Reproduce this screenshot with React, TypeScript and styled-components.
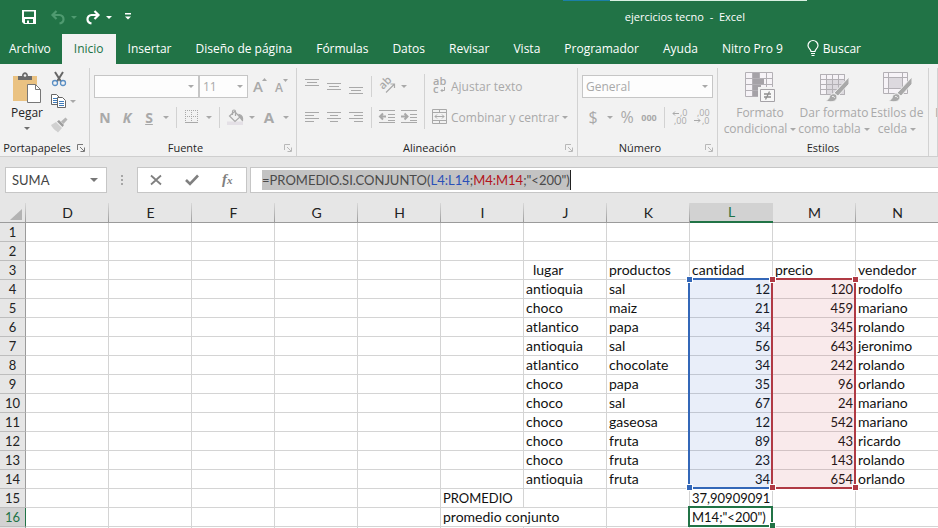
import React from "react";
import styled, { createGlobalStyle, css } from "styled-components";

const GREEN = "#217346";
const MUTED = "#a9a9a9";
const UI_FONT = `"Open Sans", "Noto Sans", sans-serif`;
const CELL_FONT = `Lato, "Open Sans", sans-serif`;
const COL = 83;
const ROW = 19;
const GUTTER = 26;
const HEAD = 20;

const Global = createGlobalStyle`
  * { box-sizing: border-box; }
  body { margin: 0; background: #e6e6e6; font-family: ${UI_FONT}; font-size: 12px; color: #262626; overflow: hidden; }
  button, input, select { font: inherit; color: inherit; margin: 0; }
  svg { flex: none; overflow: visible; }
`;

const Window = styled.div`
  display: flex;
  flex-direction: column;
  height: 100vh;
  overflow: hidden;
`;

/* ---------- title bar and tabs ---------- */

const TitleBar = styled.header`
  position: relative;
  display: flex;
  align-items: center;
  flex: none;
  height: 34px;
  padding-left: 21px;
  background: ${GREEN};
  color: #fff;
`;

const TopStrip = styled.div`
  position: absolute;
  inset: 0 0 auto 0;
  height: 1px;
  display: grid;
  grid-template-columns: 60% 5% 21% 1fr;
  & > :nth-child(2) { background: #1b7fa6; }
  & > :nth-child(3) { background: #d9f0e2; }
`;

const QuickButton = styled.button<{ $w: number; $dim?: boolean }>`
  display: flex;
  align-items: center;
  width: ${(p) => p.$w}px;
  height: 24px;
  padding: 0;
  border: 0;
  background: none;
  color: ${(p) => (p.$dim ? "#4f9a70" : "#fff")};
`;

const DocTitle = styled.h1`
  flex: 1;
  margin: 0;
  padding-right: 193px;
  text-align: right;
  font-size: 11px;
  line-height: 16px;
  font-weight: 400;
  white-space: pre;
`;

const TabBar = styled.nav`
  display: flex;
  flex: none;
  height: 30px;
  background: ${GREEN};
`;

const Tab = styled.button<{ $active?: boolean }>`
  display: flex;
  align-items: center;
  gap: 4px;
  flex: none;
  height: 30px;
  margin: 0;
  padding: 0 12px 1px;
  border: 0;
  white-space: nowrap;
  background: ${(p) => (p.$active ? "#f2f2f2" : "transparent")};
  color: ${(p) => (p.$active ? GREEN : "#fff")};
  &:first-child { padding-left: 9px; padding-right: 11px; }
`;

/* ---------- ribbon ---------- */

const Ribbon = styled.section`
  display: flex;
  flex: none;
  height: 93px;
  background: #f2f2f2;
  border-bottom: 1px solid #cfcfcf;
`;

const GroupBox = styled.div<{ $w?: number }>`
  display: flex;
  flex-direction: column;
  flex: ${(p) => (p.$w ? `0 0 ${p.$w}px` : "1 0 0")};
  min-width: 0;
  height: 88px;
  margin-top: 4px;
  border-right: 1px solid #d2d2d2;
  overflow: hidden;
`;

const GroupBody = styled.div<{ $pad?: number }>`
  display: flex;
  flex: 1;
  padding: 6px ${(p) => p.$pad ?? 4}px 0;
`;

const GroupFooter = styled.div`
  display: flex;
  align-items: center;
  height: 17px;
`;

const GroupName = styled.span`
  flex: 1;
  text-align: center;
  font-size: 11px;
  line-height: 16px;
`;

const Launcher = styled.button<{ $off?: boolean }>`
  display: flex;
  width: 15px;
  height: 14px;
  padding: 3px 0 0 3px;
  border: 0;
  background: none;
  color: ${(p) => (p.$off ? "#b8b8b8" : "#777")};
`;

const Stack = styled.div`
  display: flex;
  flex-direction: column;
  gap: 7px;
  min-width: 0;
`;

const ToolRow = styled.div`
  display: flex;
  align-items: center;
  height: 24px;
`;

const Tool = styled.button<{ $w?: number; $bold?: boolean; $italic?: boolean; $under?: boolean; $size?: number }>`
  display: flex;
  align-items: center;
  justify-content: center;
  flex: none;
  width: ${(p) => p.$w ?? 22}px;
  height: 24px;
  padding: 0;
  border: 0;
  background: none;
  color: ${MUTED};
  font-size: ${(p) => p.$size ?? 14}px;
  ${(p) => p.$bold && css`font-weight: 700;`}
  ${(p) => p.$italic && css`font-style: italic;`}
  ${(p) => p.$under && css`text-decoration: underline;`}
`;

const Divider = styled.span<{ $tall?: boolean }>`
  flex: none;
  width: 1px;
  height: ${(p) => (p.$tall ? 55 : 21)}px;
  margin: 0 4px;
  background: #d2d2d2;
`;

const TextTool = styled.button`
  display: flex;
  align-items: center;
  gap: 3px;
  height: 24px;
  padding: 0 0 0 3px;
  border: 0;
  background: none;
  color: ${MUTED};
  white-space: nowrap;
`;

const Picker = styled.span<{ $w?: number }>`
  display: grid;
  align-items: center;
  flex: none;
  width: ${(p) => (p.$w ? `${p.$w}px` : "100%")};
  height: 23px;
  border: 1px solid #c6c6c6;
  background: #fdfdfd;
  color: ${MUTED};
  & > * { grid-area: 1 / 1; }
  & > svg { justify-self: end; margin-right: 4px; pointer-events: none; }
`;

const Select = styled.select`
  appearance: none;
  width: 100%;
  height: 21px;
  padding: 0 3px;
  border: 0;
  background: none;
  opacity: 1;
  outline: none;
`;

const Clipboard = styled.div`
  display: flex;
  gap: 1px;
`;

const PasteButton = styled.button`
  display: flex;
  flex-direction: column;
  align-items: center;
  width: 46px;
  height: 60px;
  margin-top: -2px;
  padding: 0;
  border: 0;
  background: none;
  color: #262626;
  line-height: 18px;
  & > svg:last-child { margin-top: 5px; color: #6e6e6e; }
`;

const ClipColumn = styled.div`
  display: flex;
  flex-direction: column;
  margin-top: -7px;
`;

const ClipRow = styled.div`
  display: flex;
  align-items: center;
  height: 23px;
`;

const BigTool = styled.button<{ $w: number }>`
  display: flex;
  flex-direction: column;
  align-items: center;
  flex: none;
  width: ${(p) => p.$w}px;
  margin-top: -3px;
  padding: 0;
  border: 0;
  background: none;
  color: ${MUTED};
  line-height: 16px;
  white-space: nowrap;
  & > svg { margin-bottom: 2px; }
`;

const LabelLine = styled.span`
  display: flex;
  align-items: center;
  gap: 3px;
`;

/* ---------- formula bar ---------- */

const FormulaBar = styled.section`
  display: flex;
  flex: none;
  height: 46px;
  padding: 10px 0 10px 5px;
  background: #e6e6e6;
`;

const NameBox = styled.label`
  display: flex;
  align-items: center;
  width: 102px;
  height: 26px;
  padding: 0 8px 0 6px;
  border: 1px solid #c6c6c6;
  background: #fff;
  color: #777;
`;

const NameInput = styled.input`
  flex: 1;
  min-width: 0;
  padding: 0;
  border: 0;
  outline: none;
  background: none;
  font-family: ${CELL_FONT};
  font-size: 13px;
  color: #444;
`;

const Grip = styled.span`
  display: grid;
  place-items: center;
  width: 30px;
  color: #a6a6a6;
`;

const EditButtons = styled.div`
  display: grid;
  grid-template-columns: repeat(3, 1fr);
  width: 110px;
  height: 26px;
  margin-right: 3px;
  border: 1px solid #c6c6c6;
  background: #fff;
`;

const EditButton = styled.button`
  display: grid;
  place-items: center;
  padding: 0;
  border: 0;
  background: none;
  color: #808080;
`;

const FormulaBox = styled.div`
  flex: 1;
  height: 26px;
  padding: 2px 0 0 11px;
  border: 1px solid #c6c6c6;
  border-right: 0;
  background: #fff;
  font-family: ${CELL_FONT};
  font-size: 13px;
  line-height: 20px;
  color: #4a4a4a;
  white-space: nowrap;
  outline: none;
`;

const Selected = styled.span`
  display: inline-block;
  height: 20px;
  background: #c3c3c3;
  border-right: 1px solid #222;
`;

const Ref = styled.span<{ $c: string }>`
  color: ${(p) => p.$c};
`;

/* ---------- sheet ---------- */

const Sheet = styled.main`
  position: relative;
  flex: 1;
  min-height: 0;
  overflow: hidden;
  background: #fff;
`;

const Grid = styled.table`
  table-layout: fixed;
  width: ${GUTTER + COL * 12}px;
  border-collapse: separate;
  border-spacing: 0;
  font-family: ${CELL_FONT};
  font-size: 14px;
  font-variant-ligatures: none;
  line-height: 18px;
  color: #111;
`;

const Column = styled.col<{ $w: number }>`
  width: ${(p) => p.$w}px;
`;

const ColHead = styled.th<{ $on?: boolean }>`
  height: ${HEAD}px;
  padding: 0;
  font-weight: 400;
  color: ${(p) => (p.$on ? GREEN : "#222")};
  background: ${(p) =>
    p.$on
      ? "#d2d2d2"
      : "linear-gradient(#d8d8d8, #9c9c9c) right / 1px 100% no-repeat #e6e6e6"};
  border-bottom: ${(p) => (p.$on ? `2px solid ${GREEN}` : "1px solid #9b9b9b")};
`;

const Corner = styled(ColHead)`
  & > svg { display: block; margin: 4px 0 0 10px; }
`;

const RowHead = styled.th<{ $on?: boolean }>`
  height: ${ROW}px;
  padding: 0;
  font-size: 13px;
  font-weight: 400;
  text-align: center;
  background: ${(p) => (p.$on ? "#d2d2d2" : "#e6e6e6")};
  color: ${(p) => (p.$on ? GREEN : "#222")};
  border-right: 1px solid ${(p) => (p.$on ? GREEN : "#9b9b9b")};
  border-bottom: 1px solid #bdbdbd;
`;

const Cell = styled.td<{ $num?: boolean; $indent?: boolean; $caps?: boolean }>`
  height: ${ROW}px;
  padding: 0 2px 0 ${(p) => (p.$indent ? 9 : 2)}px;
  border-right: 1px solid #d4d4d4;
  border-bottom: 1px solid #d4d4d4;
  font-size: ${(p) => (p.$num || p.$caps ? 13 : 14)}px;
  text-align: ${(p) => (p.$num ? "right" : "left")};
  white-space: nowrap;
`;

const CellInput = styled.input`
  display: block;
  width: 100%;
  height: 18px;
  padding: 0;
  border: 0;
  outline: none;
  background: transparent;
`;

const RangeFrame = styled.div<{ $col: number; $row: number; $rows: number; $c: string; $fill: string }>`
  position: absolute;
  left: ${(p) => GUTTER + COL * p.$col - 2}px;
  top: ${(p) => HEAD + ROW * p.$row - 2}px;
  width: ${COL + 2}px;
  height: ${(p) => ROW * p.$rows + 2}px;
  border: 2px solid ${(p) => p.$c};
  background: ${(p) => p.$fill};
  pointer-events: none;
`;

const Handle = styled.i<{ $c: string; $right?: boolean; $bottom?: boolean }>`
  position: absolute;
  width: 5px;
  height: 5px;
  background: ${(p) => p.$c};
  outline: 1px solid #fff;
  ${(p) => (p.$right ? "right: -4px;" : "left: -3px;")}
  ${(p) => (p.$bottom ? "bottom: -3px;" : "top: -3px;")}
`;

/* ---------- icons ---------- */

const Caret = ({ size = 6 }: { size?: number }) => (
  <svg width={size} height={size / 2} viewBox="0 0 6 3" fill="currentColor"><path d="M0 0h6L3 3z" /></svg>
);

const SaveIcon = () => (
  <svg width="15" height="15" viewBox="0 0 15 15" fill="#fff">
    <path fillRule="evenodd" d="M1 0h14v14H3L1 12zM3 1.6V7h10V1.6zM4 9v4h2v-2.500h2V13h4V9z" />
  </svg>
);

const TurnIcon = ({ flip }: { flip?: boolean }) => (
  <svg width="16" height="15" viewBox="0 0 16 15" fill="none" stroke="currentColor" strokeWidth="2.200">
    <g transform={flip ? "matrix(-1 0 0 1 16 0)" : undefined}>
      <path d="M6.500 1 2.500 5l4 4" />
      <path d="M2.500 5h7a4 4 0 0 1 4 4.200c0 2.300-1.500 3.800-4 4.300" />
    </g>
  </svg>
);

const CustomizeIcon = () => (
  <svg width="7" height="8" viewBox="0 0 7 8" fill="#fff"><path d="M0 0h6v1.400H0zM0 3.500h6l-3 3z" /></svg>
);

const BulbIcon = () => (
  <svg width="12" height="17" viewBox="0 0 12 17" fill="none" stroke="#fff" strokeWidth="1.200">
    <path d="M4 11.500C4 9 1 8.500 1 5.500a5 5 0 0 1 10 0c0 3-3 3.500-3 6zM4 13.500h4M4.500 15.500h3" />
  </svg>
);

const LauncherIcon = () => (
  <svg width="8" height="8" viewBox="0 0 8 8" fill="none" stroke="currentColor">
    <path d="M.5 6V.5H6M3 3l4 4M7.500 3.500v4h-4" />
  </svg>
);

const PasteIcon = () => (
  <svg width="30" height="32" viewBox="0 0 30 32">
    <path d="M1 4h24v25H1z" fill="#eac282" />
    <path d="M6 8V4h4c0-5 6-5 6 0h4v4z" fill="#6b6b6b" />
    <circle cx="13" cy="3.500" r="1.300" fill="#f2f2f2" />
    <path d="M15.500 12.500h8l5 5v13h-13z" fill="#fff" stroke="#777" />
    <path d="M23.500 12.500v5h5" fill="none" stroke="#777" />
  </svg>
);

const CutIcon = () => (
  <svg width="16" height="16" viewBox="0 0 16 16" fill="none">
    <path d="M4 1 10 10.500M12 1 6 10.500" stroke="#666" strokeWidth="2" />
    <circle cx="4" cy="12" r="2.500" stroke="#5b8fc4" strokeWidth="1.300" />
    <circle cx="12" cy="12" r="2.500" stroke="#5b8fc4" strokeWidth="1.300" />
  </svg>
);

const CopyIcon = () => (
  <svg width="16" height="15" viewBox="0 0 16 15" fill="#fff" stroke="#666">
    <path d="M.5.5h5l3 3v7h-8z" />
    <path d="M2 4.500h4M2 6.500h4M2 8.500h4" stroke="#3f7cba" />
    <path d="M6.500 3.500h5l3 3v7h-8z" />
    <path d="M8 7.500h5M8 9.500h5M8 11.500h5" stroke="#3f7cba" />
  </svg>
);

const PainterIcon = () => (
  <svg width="17" height="16" viewBox="0 0 17 16">
    <path d="M0 8l5-3 6 6-4 4.500c-1-1.500-5-3-7-7.500z" fill="#d0d0d0" />
    <path d="M6 4.500 8 3l5 5-1.500 2z" fill="#9d9d9d" />
    <path d="M10 4.500 14.500.5 16.500 2.500 12.500 7z" fill="#b5b5b5" />
  </svg>
);

const FontSizeIcon = ({ down }: { down?: boolean }) => (
  <svg width="14" height="18" viewBox="0 0 14 18" fill="currentColor">
    <text x="0" y="15" fontFamily="Open Sans" fontWeight="600" fontSize={down ? 12 : 15}>A</text>
    <path d={down ? "M8 2h5l-2.500 3z" : "M9 4h5L11.500 1z"} />
  </svg>
);

const BordersIcon = () => (
  <svg width="14" height="14" viewBox="0 0 14 14" fill="none" stroke="currentColor">
    <path d="M0 .5h13M0 6.500h13M.5 0v12M6.500 0v12M12.500 0v12" strokeDasharray="1 1" />
    <path d="M0 12.500h13" />
  </svg>
);

const FillIcon = () => (
  <svg width="17" height="17" viewBox="0 0 17 17" fill="none" stroke="currentColor" strokeWidth="1.200">
    <path d="M0 12.500h16v3.500H0z" fill="#e4e0e6" stroke="none" />
    <path d="M7.500 2.500 13 8l-5 4.500L2.500 7z" fill="#f2f2f2" />
    <path d="M5.500 6V2.500a1.500 1.500 0 0 1 3 0V7" />
    <path d="M12 5.500c3 .5 4 3 3.500 6C14 10.500 14 9 12.500 8z" fill="currentColor" />
  </svg>
);

const LinesIcon = ({ d }: { d: string }) => (
  <svg width="15" height="15" viewBox="0 0 15 15" stroke="currentColor" strokeWidth="1"><path d={d} /></svg>
);

const alignRows: [string, string][] = [
  ["Alinear en la parte superior", "M0 .5h14M2 3.500h10M0 6.500h14"],
  ["Alinear en el medio", "M0 4.500h14M2 7.500h10M0 10.500h14"],
  ["Alinear en la parte inferior", "M0 8.500h14M2 11.500h10M0 14.500h14"],
];
const alignCols: [string, string][] = [
  ["Alinear a la izquierda", "M0 2.500h14M0 5.500h9M0 8.500h14M0 11.500h9"],
  ["Centrar", "M0 2.500h14M3 5.500h8M0 8.500h14M3 11.500h8"],
  ["Alinear a la derecha", "M0 2.500h14M5 5.500h9M0 8.500h14M5 11.500h9"],
];

const AngleIcon = () => (
  <svg width="18" height="18" viewBox="0 0 18 18" fill="none" stroke="currentColor" strokeWidth="1.200">
    <text x="0" y="0" transform="translate(5 13) rotate(-45)" fontFamily="Open Sans" fontWeight="600" fontSize="11" fill="currentColor" stroke="none">ab</text>
    <path d="M8 15.500 16 7.500M12.500 7H16.500v4" />
  </svg>
);

const IndentIcon = ({ right }: { right?: boolean }) => (
  <svg width="17" height="15" viewBox="0 0 17 15" fill="none" stroke="currentColor">
    <path d="M0 .5h16M9 4.500h7M9 7.500h7M0 12.500h16M9 10.500h7" />
    <path d={right ? "M0 6.500h6M3.500 3.500l3 3-3 3" : "M7 6.500H1M4 3.500l-3 3 3 3"} strokeWidth="2" />
  </svg>
);

const WrapIcon = () => (
  <svg width="16" height="18" viewBox="0 0 16 18" fill="currentColor">
    <text x="1" y="8" fontFamily="Open Sans" fontWeight="600" fontSize="11">ab</text>
    <text x="1" y="16" fontFamily="Open Sans" fontWeight="600" fontSize="11">c</text>
    <path d="M12.500 10v3.500H9M10.500 12 9 13.500l1.500 1.500" fill="none" stroke="currentColor" />
  </svg>
);

const MergeIcon = () => (
  <svg width="16" height="16" viewBox="0 0 16 16" fill="none" stroke="currentColor">
    <path d="M.5.5h14v14H.5zM.5 3.500h14M.5 11.500h14M7.500.5v3M7.500 11.500v3" />
    <path d="M3 7.500h9M5 5.500l-2 2 2 2M10 5.500l2 2-2 2" />
  </svg>
);

const DecimalIcon = ({ less }: { less?: boolean }) => (
  <svg width="16" height="16" viewBox="0 0 16 16" fill="currentColor">
    <g fontFamily="Open Sans" fontSize="9">
      <text x={less ? 3 : 8} y="7">{less ? ",00" : ",0"}</text>
      <text x={less ? 8 : 2} y="15">{less ? ",0" : ",00"}</text>
    </g>
    <path d={less ? "M0 11.500h6M4 9.500l2 2-2 2" : "M7 4.500H1M3 2.500l-2 2 2 2"} fill="none" stroke="currentColor" />
  </svg>
);

const CondFormatIcon = () => (
  <svg width="32" height="32" viewBox="0 0 32 32" fill="none" stroke="#b3b0b5">
    <path d="M1.500 1.500h27v24h-27zM1.500 7.500h27M1.500 13.500h27M1.500 19.500h27M8.500 1.500v24M15.500 1.500v24M22.500 1.500v24" fill="#f6f3f7" />
    <path d="M9 2h6v5H9zM9 8h11v5H9zM9 14h8v5H9zM9 20h5v5H9z" fill="#a5a2a7" stroke="none" />
    <path d="M15.500 17.500h15v13h-15z" fill="#f7f7f7" stroke="#f2f2f2" strokeWidth="3" />
    <path d="M16.500 18.500h14v12h-14z" fill="#f7f7f7" stroke="#a5a2a7" />
    <path d="M20 23h7M20 26h7M25.500 20.500l-4 8" stroke="#8f8f8f" strokeWidth="1.300" />
  </svg>
);

const Brush = () => (
  <g>
    <path d="M31 6v7L20 25l-4-3z" fill="#a9a9a9" stroke="#f2f2f2" />
    <path d="M7 29.500c4 0 4-3 5-5 2-3 7-2 7 1.500 0 5-7 6-12 3.500z" fill="#a9a9a9" stroke="#f2f2f2" />
    <path d="M14 25.500c1.500-.5 2.500.5 2.500 1.500" fill="none" stroke="#eee" />
  </g>
);

const TableFormatIcon = () => (
  <svg width="32" height="32" viewBox="0 0 32 32" fill="none" stroke="#b3b0b5">
    <path d="M2.500 3.500h24v20h-24z" fill="#f6f3f7" />
    <path d="M9 9h17v14H9z" fill="#dcd9de" stroke="none" />
    <path d="M2.500 3.500h24v20h-24zM2.500 8.500h24M2.500 13.500h24M2.500 18.500h24M8.500 3.500v20M14.500 3.500v20M20.500 3.500v20" />
    <Brush />
  </svg>
);

const CellStyleIcon = () => (
  <svg width="32" height="32" viewBox="0 0 32 32" fill="none" stroke="#b3b0b5">
    <path d="M2.500 1.500h24v21h-24zM2.500 6.500h24M2.500 17.500h24M7.500 1.500v21M21.500 1.500v21" fill="#f6f3f7" />
    <path d="M8 7h13v10H8z" fill="#dcd9de" stroke="none" />
    <Brush />
  </svg>
);

const CancelIcon = () => (
  <svg width="12" height="12" viewBox="0 0 12 12" fill="none" stroke="currentColor" strokeWidth="1.800"><path d="M1 1.500l10 9M11 1.500l-10 9" /></svg>
);
const AcceptIcon = () => (
  <svg width="14" height="12" viewBox="0 0 14 12" fill="none" stroke="currentColor" strokeWidth="2.600"><path d="M1 6l4 4 8-8.500" /></svg>
);
const FxIcon = () => (
  <svg width="14" height="16" viewBox="0 0 14 16" fill="currentColor" fontFamily="Liberation Serif" fontStyle="italic" fontWeight="700">
    <text x="1" y="12" fontSize="15">f</text>
    <text x="6" y="12" fontSize="11">x</text>
  </svg>
);

/* ---------- data ---------- */

const tabs = ["Archivo", "Inicio", "Insertar", "Diseño de página", "Fórmulas", "Datos", "Revisar", "Vista", "Programador", "Ayuda", "Nitro Pro 9"];
const columns = ["D", "E", "F", "G", "H", "I", "J", "K", "L", "M", "N", "O"];

const records: [string, string, number, number, string][] = [
  ["antioquia", "sal", 12, 120, "rodolfo"],
  ["choco", "maiz", 21, 459, "mariano"],
  ["atlantico", "papa", 34, 345, "rolando"],
  ["antioquia", "sal", 56, 643, "jeronimo"],
  ["atlantico", "chocolate", 34, 242, "rolando"],
  ["choco", "papa", 35, 96, "orlando"],
  ["choco", "sal", 67, 24, "mariano"],
  ["choco", "gaseosa", 12, 542, "mariano"],
  ["choco", "fruta", 89, 43, "ricardo"],
  ["choco", "fruta", 23, 143, "rolando"],
  ["antioquia", "fruta", 34, 654, "orlando"],
];

const blanks = (n: number, key: string) => Array.from({ length: n }, (_, i) => <Cell key={key + i} />);

type GroupProps = { name: string; w?: number; launcher?: "on" | "off"; pad?: number; children?: React.ReactNode };

const Group = ({ name, w, launcher, pad, children }: GroupProps) => (
  <GroupBox $w={w} role="group" aria-label={name}>
    <GroupBody $pad={pad}>{children}</GroupBody>
    <GroupFooter>
      <GroupName>{name}</GroupName>
      {launcher && <Launcher $off={launcher === "off"} aria-label={`Configuración de ${name}`}><LauncherIcon /></Launcher>}
    </GroupFooter>
  </GroupBox>
);

const Drop = ({ label }: { label: string }) => <Tool $w={12} aria-label={label}><Caret /></Tool>;

const Range = ({ col, c, fill }: { col: number; c: string; fill: string }) => (
  <RangeFrame $col={col} $row={3} $rows={11} $c={c} $fill={fill}>
    <Handle $c={c} />
    <Handle $c={c} $right />
    <Handle $c={c} $bottom />
    <Handle $c={c} $right $bottom />
  </RangeFrame>
);

export default function App() {
  return (
    <Window>
      <Global />
      <TitleBar>
        <TopStrip><i /><i /><i /></TopStrip>
        <QuickButton $w={29} aria-label="Guardar"><SaveIcon /></QuickButton>
        <QuickButton $w={21} $dim aria-label="Deshacer"><TurnIcon /></QuickButton>
        <QuickButton $w={14} $dim aria-label="Opciones de deshacer"><Caret /></QuickButton>
        <QuickButton $w={21} aria-label="Rehacer"><TurnIcon flip /></QuickButton>
        <QuickButton $w={19} aria-label="Opciones de rehacer"><Caret /></QuickButton>
        <QuickButton $w={12} aria-label="Personalizar barra"><CustomizeIcon /></QuickButton>
        <DocTitle>{"ejercicios tecno  -  Excel"}</DocTitle>
      </TitleBar>

      <TabBar>
        {tabs.map((t) => <Tab key={t} $active={t === "Inicio"}>{t}</Tab>)}
        <Tab><BulbIcon />Buscar</Tab>
      </TabBar>

      <Ribbon>
        <Group name="Portapapeles" w={90} launcher="on">
          <Clipboard>
            <PasteButton><PasteIcon />Pegar<Caret /></PasteButton>
            <ClipColumn>
              <ClipRow><Tool $w={16} aria-label="Cortar"><CutIcon /></Tool></ClipRow>
              <ClipRow>
                <Tool $w={16} aria-label="Copiar"><CopyIcon /></Tool>
                <Drop label="Opciones de copiar" />
              </ClipRow>
              <ClipRow><Tool $w={16} aria-label="Copiar formato"><PainterIcon /></Tool></ClipRow>
            </ClipColumn>
          </Clipboard>
        </Group>

        <Group name="Fuente" w={207} launcher="off">
          <Stack>
            <ToolRow>
              <Picker $w={105}><Select disabled aria-label="Fuente"><option> </option></Select><Caret /></Picker>
              <Picker $w={49}><Select disabled aria-label="Tamaño de fuente"><option>11</option></Select><Caret /></Picker>
              <Tool $w={24} aria-label="Aumentar tamaño"><FontSizeIcon /></Tool>
              <Tool $w={20} aria-label="Disminuir tamaño"><FontSizeIcon down /></Tool>
            </ToolRow>
            <ToolRow>
              <Tool $bold>N</Tool>
              <Tool $bold $italic>K</Tool>
              <Tool $bold $under>S</Tool>
              <Drop label="Opciones de subrayado" />
              <Divider />
              <Tool aria-label="Bordes"><BordersIcon /></Tool>
              <Drop label="Opciones de bordes" />
              <Divider />
              <Tool aria-label="Color de relleno"><FillIcon /></Tool>
              <Drop label="Opciones de relleno" />
              <Tool $bold $size={15}>A</Tool>
              <Drop label="Opciones de color" />
            </ToolRow>
          </Stack>
        </Group>

        <Group name="Alineación" w={281} launcher="off">
          <Stack>
            <ToolRow>
              {alignRows.map(([l, d]) => <Tool key={l} aria-label={l}><LinesIcon d={d} /></Tool>)}
              <Divider />
              <Tool aria-label="Orientación"><AngleIcon /></Tool>
              <Drop label="Opciones de orientación" />
            </ToolRow>
            <ToolRow>
              {alignCols.map(([l, d]) => <Tool key={l} aria-label={l}><LinesIcon d={d} /></Tool>)}
              <Divider />
              <Tool aria-label="Disminuir sangría"><IndentIcon /></Tool>
              <Tool aria-label="Aumentar sangría"><IndentIcon right /></Tool>
            </ToolRow>
          </Stack>
          <Divider $tall />
          <Stack>
            <TextTool><WrapIcon />Ajustar texto</TextTool>
            <ToolRow>
              <TextTool><MergeIcon />Combinar y centrar</TextTool>
              <Drop label="Opciones de combinar" />
            </ToolRow>
          </Stack>
        </Group>

        <Group name="Número" w={140} launcher="off">
          <Stack>
            <ToolRow>
              <Picker><Select disabled aria-label="Formato de número"><option>General</option></Select><Caret /></Picker>
            </ToolRow>
            <ToolRow>
              <Tool $size={16}>$</Tool>
              <Drop label="Opciones de moneda" />
              <Tool $size={16}>%</Tool>
              <Tool $bold $size={9}>000</Tool>
              <Divider />
              <Tool aria-label="Aumentar decimales"><DecimalIcon /></Tool>
              <Tool aria-label="Disminuir decimales"><DecimalIcon less /></Tool>
            </ToolRow>
          </Stack>
        </Group>

        <Group name="Estilos" w={211}>
          <BigTool $w={76}><CondFormatIcon />Formato<LabelLine>condicional<Caret /></LabelLine></BigTool>
          <BigTool $w={72}><TableFormatIcon />Dar formato<LabelLine>como tabla<Caret /></LabelLine></BigTool>
          <BigTool $w={54}><CellStyleIcon />Estilos de<LabelLine>celda<Caret /></LabelLine></BigTool>
        </Group>

        <Group name="" pad={6}>
          <BigTool $w={44}><svg width="32" height="32" />Insertar</BigTool>
        </Group>
      </Ribbon>

      <FormulaBar>
        <NameBox><NameInput aria-label="Cuadro de nombres" defaultValue="SUMA" /><Caret size={8} /></NameBox>
        <Grip><svg width="2" height="11" fill="currentColor"><path d="M0 0h2v2H0zM0 4h2v2H0zM0 8h2v2H0z" /></svg></Grip>
        <EditButtons>
          <EditButton aria-label="Cancelar"><CancelIcon /></EditButton>
          <EditButton aria-label="Introducir"><AcceptIcon /></EditButton>
          <EditButton aria-label="Insertar función"><FxIcon /></EditButton>
        </EditButtons>
        <FormulaBox role="textbox" aria-label="Barra de fórmulas" contentEditable suppressContentEditableWarning spellCheck={false}>
          <Selected>=PROMEDIO.SI.CONJUNTO(<Ref $c="#2a50b8">L4:L14</Ref>;<Ref $c="#b3141c">M4:M14</Ref>;"&lt;200")</Selected>
        </FormulaBox>
      </FormulaBar>

      <Sheet>
        <Grid>
          <colgroup>
            <Column $w={GUTTER} />
            {columns.map((c) => <Column key={c} $w={COL} />)}
          </colgroup>
          <thead>
            <tr>
              <Corner aria-label="Seleccionar todo"><svg width="12" height="12" fill="#b3b3b3"><path d="M12 0v11H0z" /></svg></Corner>
              {columns.map((c) => <ColHead key={c} $on={c === "L"}>{c}</ColHead>)}
            </tr>
          </thead>
          <tbody>
            {[1, 2].map((n) => <tr key={n}><RowHead>{n}</RowHead>{blanks(12, "b")}</tr>)}
            <tr>
              <RowHead>3</RowHead>
              {blanks(6, "b")}
              <Cell $indent>lugar</Cell><Cell>productos</Cell><Cell>cantidad</Cell><Cell>precio</Cell><Cell>vendedor</Cell><Cell />
            </tr>
            {records.map(([place, product, qty, price, seller], i) => (
              <tr key={i}>
                <RowHead>{i + 4}</RowHead>
                {blanks(6, "b")}
                <Cell>{place}</Cell><Cell>{product}</Cell><Cell $num>{qty}</Cell><Cell $num>{price}</Cell><Cell>{seller}</Cell><Cell />
              </tr>
            ))}
            <tr>
              <RowHead>15</RowHead>
              {blanks(5, "b")}
              <Cell $caps>PROMEDIO</Cell><Cell /><Cell /><Cell $num>37,90909091</Cell>{blanks(3, "e")}
            </tr>
            <tr>
              <RowHead $on>16</RowHead>
              {blanks(5, "b")}
              <Cell colSpan={2}>promedio conjunto</Cell><Cell />
              <Cell $caps><CellInput aria-label="L16" defaultValue={'M14;"<200")'} /></Cell>{blanks(3, "e")}
            </tr>
            <tr><RowHead>17</RowHead>{blanks(12, "b")}</tr>
          </tbody>
        </Grid>
        <Range col={8} c="#3367b8" fill="rgba(51, 103, 200, 0.11)" />
        <Range col={9} c="#b03a44" fill="rgba(200, 60, 70, 0.11)" />
        <RangeFrame $col={8} $row={15} $rows={1} $c={GREEN} $fill="transparent">
          <Handle $c={GREEN} $right $bottom />
        </RangeFrame>
      </Sheet>
    </Window>
  );
}
